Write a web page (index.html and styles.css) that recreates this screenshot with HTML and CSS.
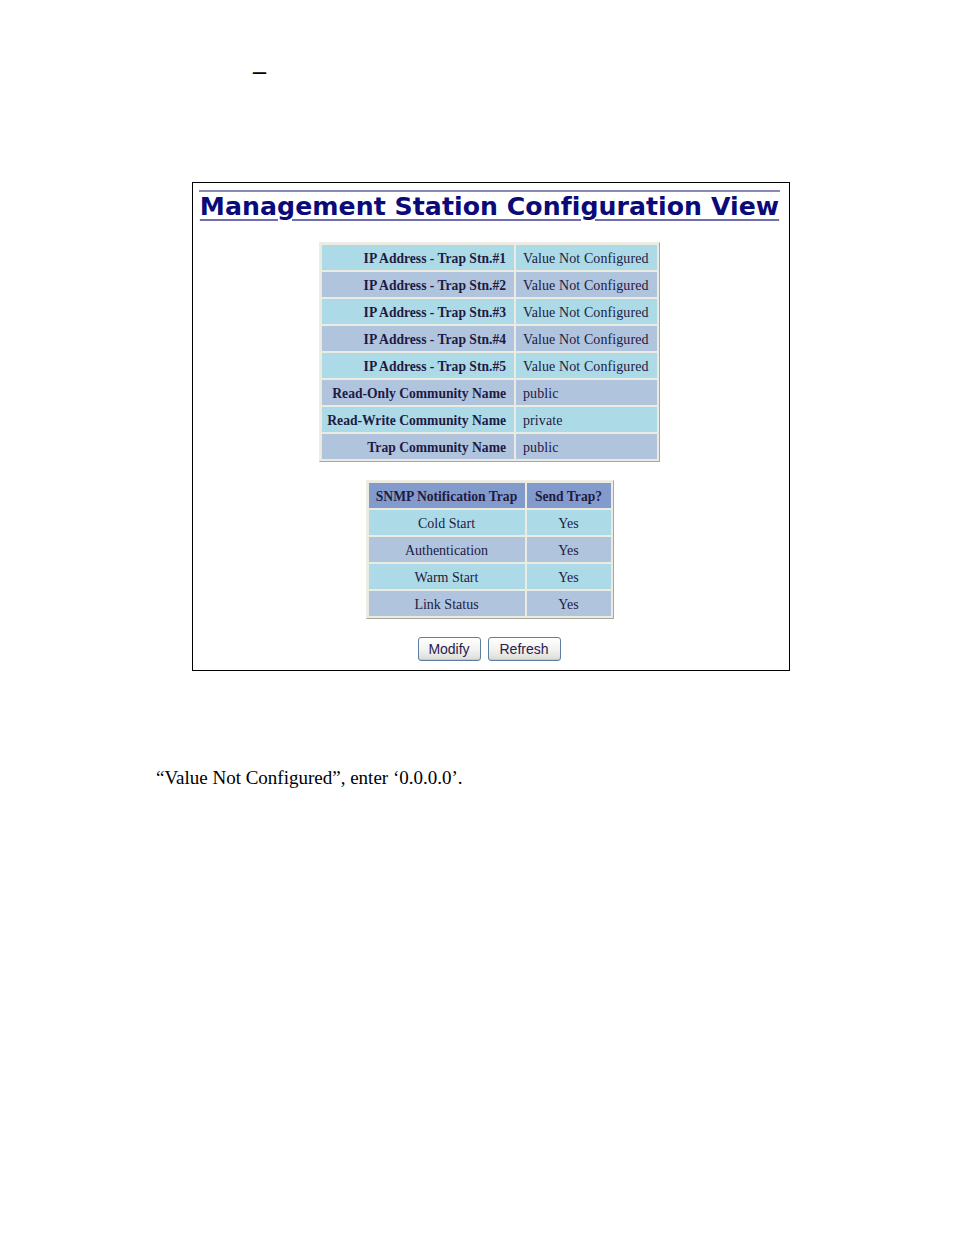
FILE: index.html
```html
<!DOCTYPE html>
<html>
<head>
<meta charset="utf-8">
<link rel="stylesheet" href="styles.css">
</head>
<body>
<div class="page">
  <div class="dash-line"><span class="dash">–</span></div>
  <div class="frame">
    <h1 class="title">Management Station Configuration View</h1>
    <table class="grid cfg">
      <tr class="r1"><th>IP Address - Trap Stn.#1</th><td>Value Not Configured</td></tr>
      <tr class="r2"><th>IP Address - Trap Stn.#2</th><td>Value Not Configured</td></tr>
      <tr class="r1"><th>IP Address - Trap Stn.#3</th><td>Value Not Configured</td></tr>
      <tr class="r2"><th>IP Address - Trap Stn.#4</th><td>Value Not Configured</td></tr>
      <tr class="r1"><th>IP Address - Trap Stn.#5</th><td>Value Not Configured</td></tr>
      <tr class="r2"><th>Read-Only Community Name</th><td>public</td></tr>
      <tr class="r1"><th>Read-Write Community Name</th><td>private</td></tr>
      <tr class="r2"><th>Trap Community Name</th><td>public</td></tr>
    </table>
    <table class="grid traps">
      <tr class="head"><th class="c1">SNMP Notification Trap</th><th class="c2">Send Trap?</th></tr>
      <tr class="r1"><td>Cold Start</td><td>Yes</td></tr>
      <tr class="r2"><td>Authentication</td><td>Yes</td></tr>
      <tr class="r1"><td>Warm Start</td><td>Yes</td></tr>
      <tr class="r2"><td>Link Status</td><td>Yes</td></tr>
    </table>
    <div class="buttons">
      <button class="btn btn-modify" type="button">Modify</button>
      <button class="btn btn-refresh" type="button">Refresh</button>
    </div>
  </div>
  <p class="note">“Value Not Configured”, enter ‘0.0.0.0’.</p>
</div>
</body>
</html>
```
FILE: styles.css
```css
html, body {
  margin: 0;
  padding: 0;
  background: #ffffff;
}

.page {
  width: 954px;
  min-height: 1235px;
  font-family: "Liberation Serif", "Times New Roman", serif;
  color: #000;
}

.dash-line {
  height: 26px;
  padding-top: 58px;
  padding-left: 253px;
  line-height: 26px;
}

.dash {
  font-family: "Liberation Serif", serif;
  font-size: 26px;
  font-weight: bold;
  display: inline-block;
}

.frame {
  box-sizing: border-box;
  margin-top: 98px;
  margin-left: 192px;
  width: 598px;
  height: 489px;
  border: 1px solid #000;
  padding: 7px 9px 0 6px;
}

.title {
  margin: 0;
  border-top: 2px solid #8a8ab8;
  padding-top: 0;
  font-family: "DejaVu Sans", Verdana, sans-serif;
  font-weight: bold;
  font-size: 25.2px;
  line-height: 30px;
  color: #0a0a78;
  text-align: center;
  text-decoration: underline;
  text-decoration-color: #7070b0;
  text-decoration-thickness: 2px;
  text-underline-offset: 4px;
  white-space: nowrap;
  letter-spacing: 0.05px;
}

.grid {
  border-collapse: separate;
  border-spacing: 2px;
  background: #ecebe2;
  border: 1px solid;
  border-color: #eeede6 #a9a79c #a9a79c #eeede6;
  margin: 0 auto;
  font-family: "Liberation Serif", "Times New Roman", serif;
  font-size: 14px;
  color: #1e1a44;
}

.grid th, .grid td {
  height: 25px;
  padding: 2px 0 0 0;
  box-sizing: border-box;
  vertical-align: middle;
  white-space: nowrap;
}

.r1 th, .r1 td { background: #acdae6; }
.r2 th, .r2 td { background: #b0c4de; }

.cfg {
  margin-top: 20px;
}

.cfg th {
  width: 192px;
  text-align: right;
  padding-right: 8px;
  font-weight: bold;
  font-size: 13.6px;
}

.cfg td {
  width: 141px;
  text-align: left;
  padding-left: 7px;
  letter-spacing: 0.1px;
}

.traps {
  margin-top: 18px;
}

.traps .head th {
  background: #839bcc;
  font-weight: bold;
  font-size: 13.6px;
  text-align: center;
}

.traps .c1 { width: 156px; }
.traps .c2 { width: 84px; }

.traps td {
  text-align: center;
}

.buttons {
  display: flex;
  justify-content: center;
  gap: 7px;
  margin-top: 18px;
  padding-right: 1px;
}

.btn {
  box-sizing: border-box;
  height: 24px;
  padding: 0 9px;
  border: 1px solid #5d7ea0;
  border-radius: 3px;
  background: linear-gradient(#ffffff, #f1f1ee 55%, #dcdcd6);
  font-family: "Liberation Sans", Arial, sans-serif;
  font-size: 14px;
  color: #2a2050;
  box-shadow: inset 0 -1px 0 #c8c8c0;
}

.btn-modify { width: 63px; }
.btn-refresh { width: 73px; }

.note {
  margin: 96px 0 0 156px;
  font-family: "Liberation Serif", "Times New Roman", serif;
  font-size: 19px;
  line-height: 22px;
}
```
